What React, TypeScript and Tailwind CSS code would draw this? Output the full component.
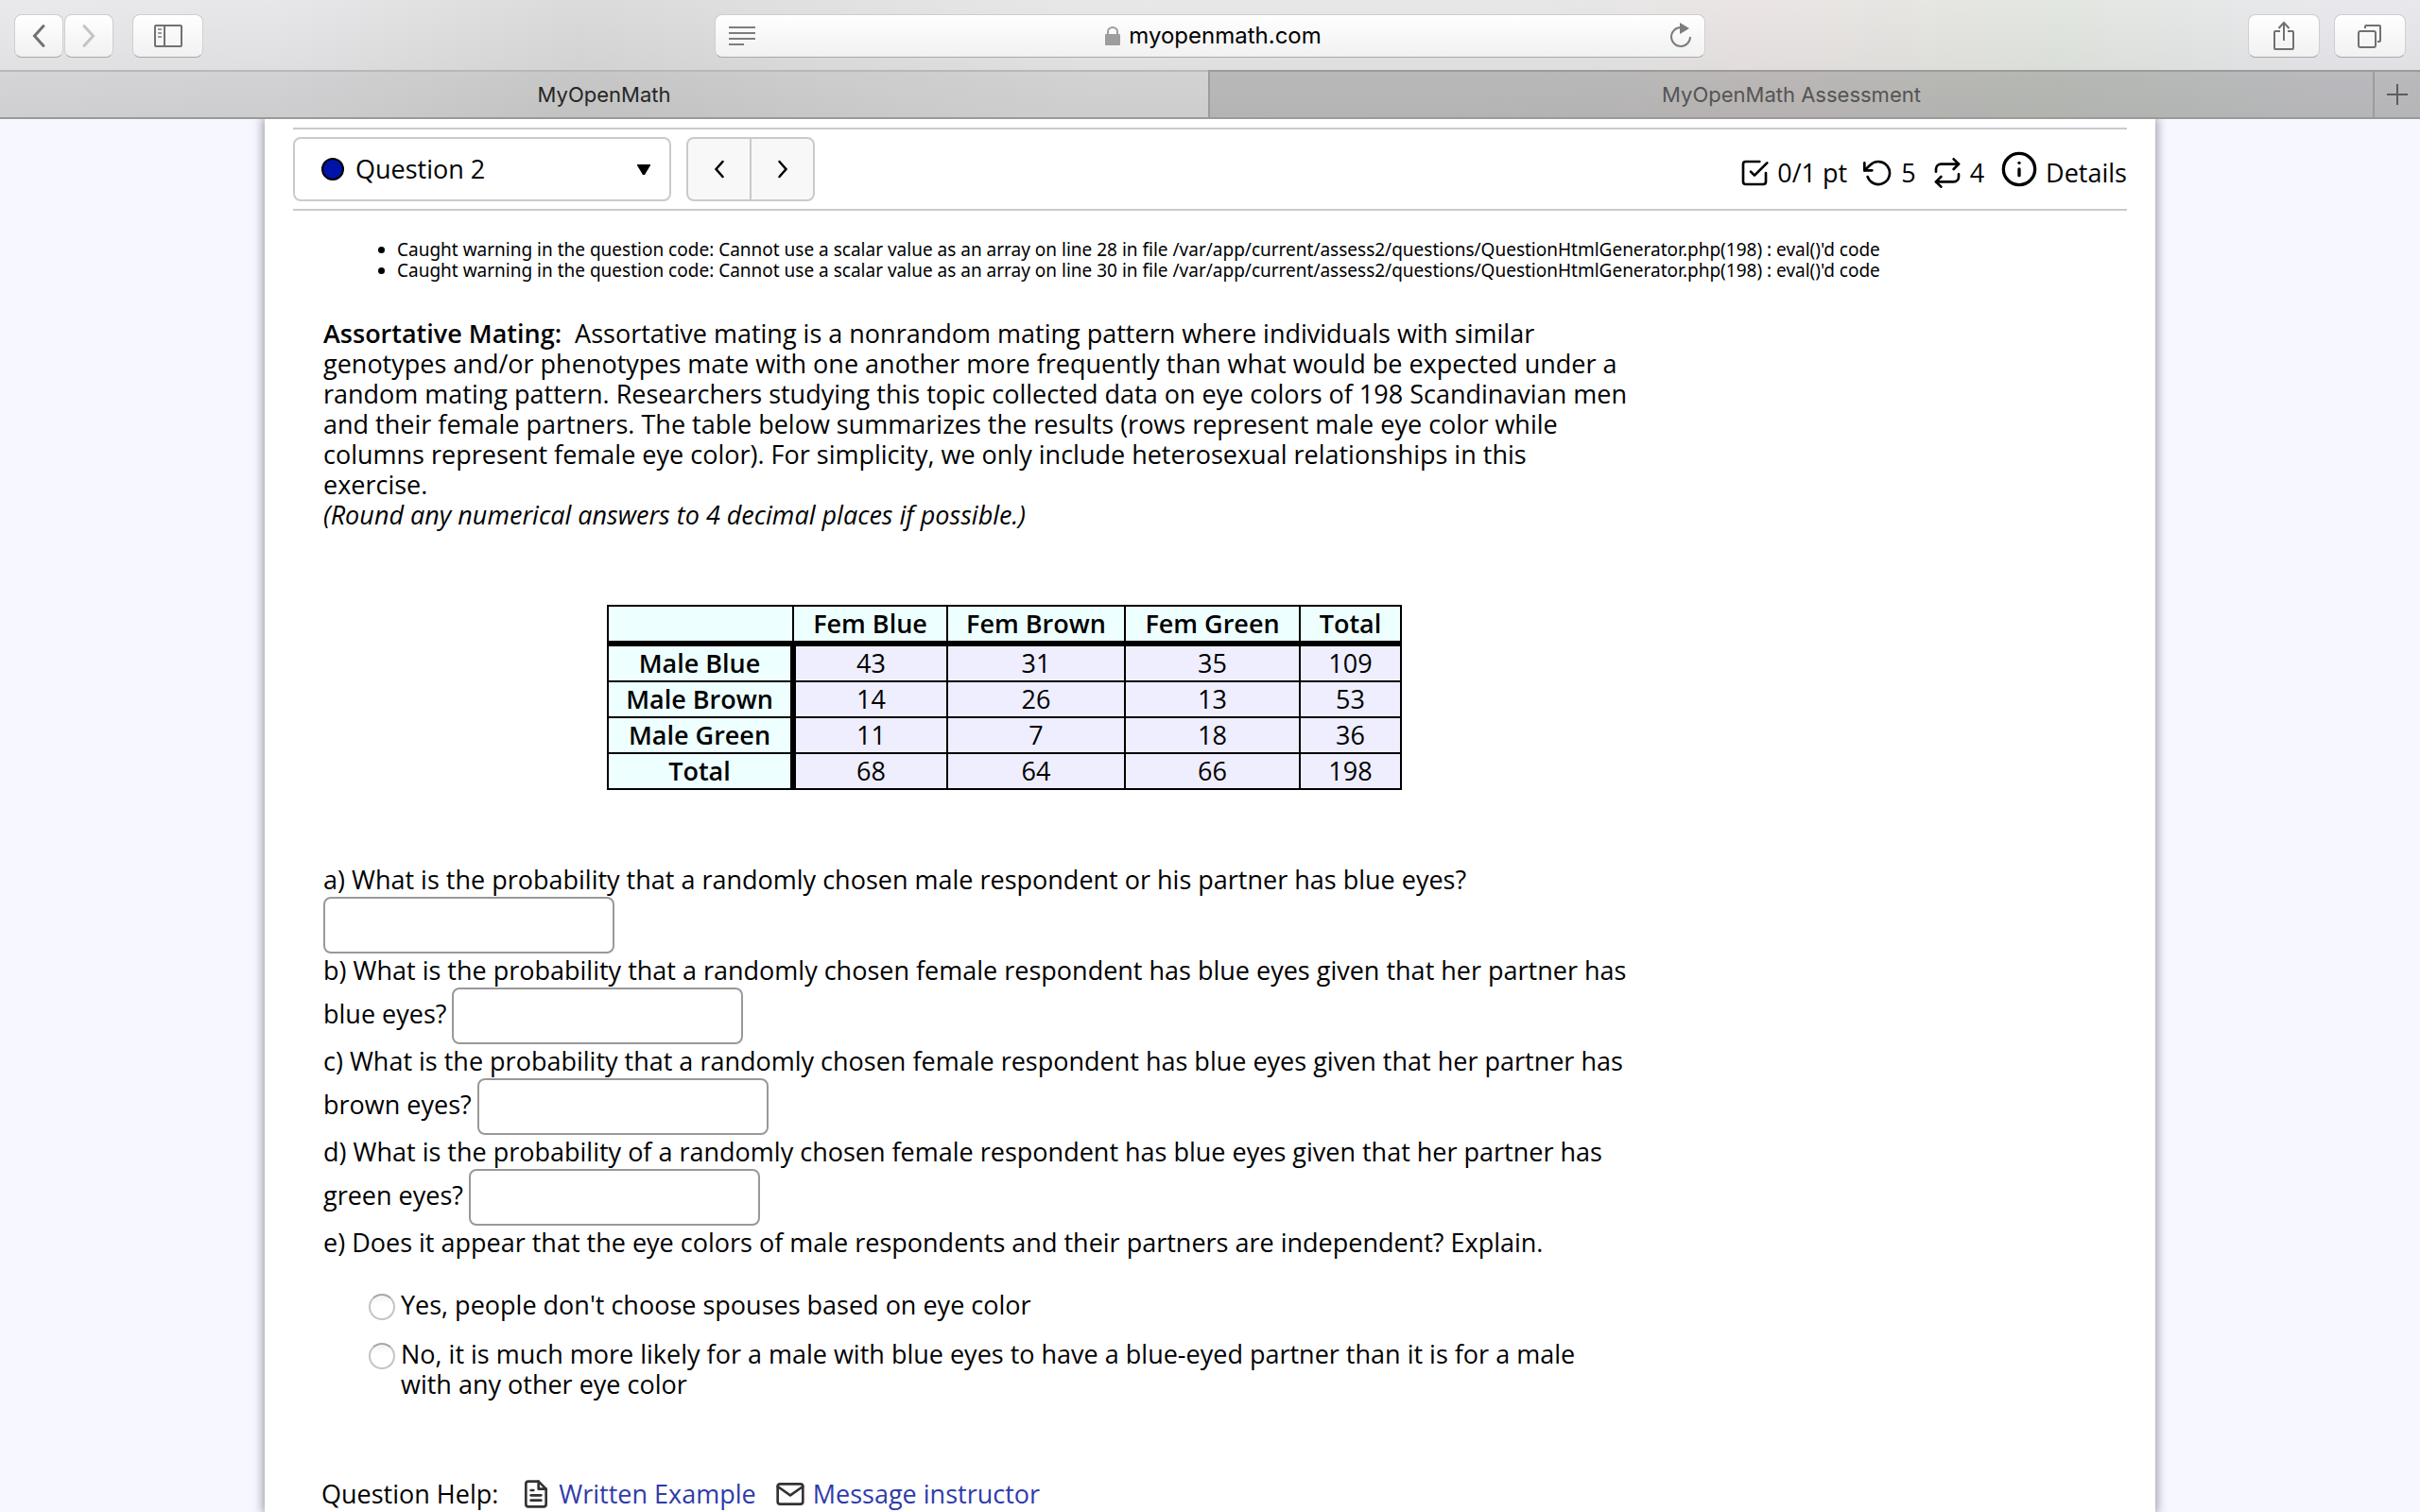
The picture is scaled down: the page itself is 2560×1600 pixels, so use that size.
import type { ReactNode } from "react";
import { FiCheckSquare, FiFileText, FiInfo, FiMail, FiRepeat, FiRotateCcw } from "react-icons/fi";

const columns = ["Fem Blue", "Fem Brown", "Fem Green", "Total"];

const rows = [
  { label: "Male Blue", values: [43, 31, 35, 109] },
  { label: "Male Brown", values: [14, 26, 13, 53] },
  { label: "Male Green", values: [11, 7, 18, 36] },
  { label: "Total", values: [68, 64, 66, 198] },
];

const questions = [
  {
    id: "qa",
    text: "a) What is the probability that a randomly chosen male respondent or his partner has blue eyes?",
    tail: "",
  },
  {
    id: "qb",
    text: "b) What is the probability that a randomly chosen female respondent has blue eyes given that her partner has",
    tail: "blue eyes?",
  },
  {
    id: "qc",
    text: "c) What is the probability that a randomly chosen female respondent has blue eyes given that her partner has",
    tail: "brown eyes?",
  },
  {
    id: "qd",
    text: "d) What is the probability of a randomly chosen female respondent has blue eyes given that her partner has",
    tail: "green eyes?",
  },
];

const warningLines = [28, 30];

function ToolbarButton({ label, className, children }: { label: string; className: string; children: ReactNode }) {
  return (
    <button
      type="button"
      aria-label={label}
      className={`flex h-[46px] items-center justify-center rounded-lg border border-[#cfcfcf] border-b-[#a9a9a9] bg-linear-to-b from-white to-[#f1f1f1] text-[#717171] ${className}`}
    >
      {children}
    </button>
  );
}

function BrowserToolbar() {
  return (
    <div className="grid h-[74px] grid-cols-[1fr_1048px_1fr] items-center px-[15px] pt-0.5">
      <div className="flex items-center gap-5">
        <div className="flex gap-px">
          <ToolbarButton label="Back" className="w-[52px]">
            <svg width="16" height="26" viewBox="0 0 16 26" fill="none" stroke="currentColor" strokeWidth="3" strokeLinecap="round">
              <path d="M13 2.500 3.500 13 13 23.500" />
            </svg>
          </ToolbarButton>
          <ToolbarButton label="Forward" className="w-[52px]">
            <svg width="16" height="26" viewBox="0 0 16 26" fill="none" stroke="#c4c4c4" strokeWidth="3" strokeLinecap="round">
              <path d="M3 2.500 12.500 13 3 23.500" />
            </svg>
          </ToolbarButton>
        </div>
        <ToolbarButton label="Show sidebar" className="w-[75px]">
          <svg width="30" height="24" viewBox="0 0 30 24" fill="none" stroke="currentColor" strokeWidth="2">
            <rect x="1" y="1" width="28" height="22" rx="1" />
            <path d="M11 1v22" />
            <path d="M4 5h4M4 9h4M4 13h4" stroke="#9a9a9a" />
          </svg>
        </ToolbarButton>
      </div>

      <div className="flex h-[46px] items-center justify-between rounded-lg border border-[#cfcfcf] border-b-[#a9a9a9] bg-linear-to-b from-white to-[#f1f1f1] px-3.5 text-[#7d7d7d]">
        <svg width="28" height="20" viewBox="0 0 28 20" fill="none" stroke="currentColor" strokeWidth="2">
          <path d="M0 1h28M0 7h28M0 13h28M0 19h16" />
        </svg>
        <div className="flex items-center gap-2 text-2xl text-black">
          <svg width="18" height="20" viewBox="0 0 18 20" fill="none">
            <rect x="1" y="8" width="16" height="12" rx="1" fill="#9d9d9d" />
            <path d="M4 9V5.500a5 4.500 0 0 1 10 0V9" stroke="#9d9d9d" strokeWidth="2" />
          </svg>
          myopenmath.com
        </div>
        <button type="button" aria-label="Reload" className="pb-0.5">
          <svg width="22" height="28" viewBox="0 0 22 28" fill="none" stroke="currentColor" strokeWidth="2">
            <path d="M11 6a10 10 0 1 0 10 10" />
            <path d="M10 1v12l10-6z" fill="currentColor" stroke="none" />
          </svg>
        </button>
      </div>

      <div className="flex justify-end gap-[15px]">
        <ToolbarButton label="Share" className="w-[76px]">
          <svg width="24" height="32" viewBox="0 0 24 32" fill="none" stroke="currentColor" strokeWidth="2">
            <path d="M8 11H3a1 1 0 0 0-1 1v17a1 1 0 0 0 1 1h18a1 1 0 0 0 1-1V12a1 1 0 0 0-1-1h-5M12 21V2M6.500 8 12 2l5.500 6" />
          </svg>
        </ToolbarButton>
        <ToolbarButton label="Show all tabs" className="w-[76px]">
          <svg width="26" height="26" viewBox="0 0 26 26" fill="none" stroke="currentColor" strokeWidth="2">
            <rect x="1" y="8" width="18" height="17" rx="2" />
            <path d="M8 5V3a1 1 0 0 1 1-1h14a1 1 0 0 1 1 1v15a1 1 0 0 1-1 1h-2" />
          </svg>
        </ToolbarButton>
      </div>
    </div>
  );
}

function BrowserTabs() {
  return (
    <div role="tablist" className="grid h-[52px] grid-cols-[1278fr_1232fr_50fr] border-b-2 border-[#9a9a9a] text-[22px]">
      <button type="button" role="tab" aria-selected="true" className="border-t-2 border-[#b8b8b8] bg-black/5 text-[#262626]">
        MyOpenMath
      </button>
      <button type="button" role="tab" aria-selected="false" className="border-t-2 border-l-2 border-[#9c9c9c] bg-black/17 text-[#545454]">
        MyOpenMath Assessment
      </button>
      <button
        type="button"
        aria-label="New tab"
        className="flex items-center justify-center border-t-2 border-l-2 border-[#9c9c9c] bg-black/17"
      >
        <svg width="22" height="22" viewBox="0 0 22 22" stroke="#5c5c5c" strokeWidth="2">
          <path d="M11 0v22M0 11h22" />
        </svg>
      </button>
    </div>
  );
}

function QuestionHeader() {
  return (
    <div className="flex items-center justify-between border-y-2 border-[#cacaca] py-2">
      <div className="flex gap-4">
        <div className="flex h-[68px] w-[400px] items-center rounded-lg border-2 border-[#cacaca] pr-5 pl-7">
          <svg width="24" height="24" viewBox="0 0 24 24">
            <circle cx="12" cy="12" r="11" fill="#0013a8" stroke="black" strokeWidth="2" />
          </svg>
          <select aria-label="Question" className="flex-1 appearance-none bg-transparent pl-3">
            <option>Question 2</option>
          </select>
          <svg width="14" height="12" viewBox="0 0 14 12">
            <path d="M0 1h14v1L8 12H6L0 2z" />
          </svg>
        </div>
        <div className="flex rounded-lg border-2 border-[#cacaca] bg-[#f8f8f8]">
          <button type="button" aria-label="Previous question" className="flex w-[67px] items-center justify-center border-r-2 border-[#cacaca]">
            <svg width="12" height="20" viewBox="0 0 12 20" fill="none" stroke="black" strokeWidth="2.500" strokeLinecap="round">
              <path d="m9.500 2-7 8 7 8" />
            </svg>
          </button>
          <button type="button" aria-label="Next question" className="flex w-[65px] items-center justify-center">
            <svg width="12" height="20" viewBox="0 0 12 20" fill="none" stroke="black" strokeWidth="2.500" strokeLinecap="round">
              <path d="m2.500 2 7 8-7 8" />
            </svg>
          </button>
        </div>
      </div>
      <div className="flex items-center gap-[17px]">
        <span className="flex items-center gap-2 pt-2">
          <FiCheckSquare size={32} /> 0/1 pt
        </span>
        <span className="flex items-center gap-2 pt-2">
          <FiRotateCcw size={32} /> 5
        </span>
        <span className="flex items-center gap-2 pt-2">
          <FiRepeat size={32} /> 4
        </span>
        <button type="button" className="flex items-center gap-2">
          <FiInfo size={40} />
          <span className="pt-2">Details</span>
        </button>
      </div>
    </div>
  );
}

function EyeColorTable() {
  return (
    <table className="mt-[79px] ml-[300px] w-[839px] table-fixed border-collapse text-center leading-9">
      <colgroup>
        <col className="w-[196px]" />
        <col className="w-[163px]" />
        <col className="w-[188px]" />
        <col className="w-[185px]" />
        <col className="w-[107px]" />
      </colgroup>
      <thead>
        <tr className="bg-[#eeffff]">
          <td className="border-2 border-b-[6px] border-black" />
          {columns.map((column) => (
            <th key={column} scope="col" className="border-2 border-b-[6px] border-black p-0 font-semibold">
              {column}
            </th>
          ))}
        </tr>
      </thead>
      <tbody>
        {rows.map((row) => (
          <tr key={row.label} className="bg-[#eeeeff]">
            <th scope="row" className="border-2 border-r-[6px] border-black bg-[#eeffff] p-0 font-semibold">
              {row.label}
            </th>
            {row.values.map((value, i) => (
              <td key={i} className="border-2 border-black p-0">
                {value}
              </td>
            ))}
          </tr>
        ))}
      </tbody>
    </table>
  );
}

function Radio({ id }: { id: string }) {
  return (
    <input
      id={id}
      type="radio"
      name="independent"
      className="mt-1 size-7 shrink-0 appearance-none rounded-full border-2 border-[#c4c4c4] border-t-[#a8a8a8] bg-linear-to-b from-[#f4f4f4] to-white to-40%"
    />
  );
}

export default function App() {
  return (
    <div className="flex min-h-screen flex-col bg-[#f7f7ff] font-['Open_Sans',sans-serif] text-[27px] leading-8 text-black">
      <header className="relative bg-[linear-gradient(90deg,#e4e4f040_0%,#d8d8e040_12%,#a8a8a840_24%,#dcdcdc40_45%,#d8d8d840_65%,#e8d0d040_72%,#c8d8c040_85%,#e0e0f040_96%),linear-gradient(#ececec,#d8d8d8)] font-[Inter,sans-serif]">
        <BrowserToolbar />
        <BrowserTabs />
      </header>

      <main className="mx-[280px] flex-1 bg-white px-[30px] pt-[9px] shadow-[0_0_10px_2px_#9a9aa8]">
        <QuestionHeader />

        <ul className="mt-[30px] ml-[110px] list-disc font-['Noto_Sans',sans-serif] text-[19px] leading-[22px]">
          {warningLines.map((line) => (
            <li key={line}>
              Caught warning in the question code: Cannot use a scalar value as an array on line {line} in file
              /var/app/current/assess2/questions/QuestionHtmlGenerator.php(198) : eval()'d code
            </li>
          ))}
        </ul>

        <div className="mt-10 ml-8">
          <p>
            <strong className="font-semibold">Assortative Mating:</strong>&nbsp; Assortative mating is a nonrandom mating pattern where individuals with similar
            <br />
            genotypes and/or phenotypes mate with one another more frequently than what would be expected under a
            <br />
            random mating pattern. Researchers studying this topic collected data on eye colors of 198 Scandinavian men
            <br />
            and their female partners. The table below summarizes the results (rows represent male eye color while
            <br />
            columns represent female eye color). For simplicity, we only include heterosexual relationships in this
            <br />
            exercise.
            <br />
            <em>(Round any numerical answers to 4 decimal places if possible.)</em>
          </p>

          <EyeColorTable />

          <div className="mt-[79px]">
            {questions.map((question) => (
              <div key={question.id}>
                <label htmlFor={question.id}>{question.text}</label>
                <div className="flex h-16 items-center gap-1.5">
                  {question.tail && (
                    <label htmlFor={question.id} className="pb-1">
                      {question.tail}
                    </label>
                  )}
                  <input id={question.id} type="text" className="h-[60px] w-[308px] rounded-lg border-2 border-[#999999] bg-white px-3" />
                </div>
              </div>
            ))}
            <p>e) Does it appear that the eye colors of male respondents and their partners are independent? Explain.</p>
          </div>

          <div className="mt-[34px] ml-12 flex flex-col gap-5">
            <div className="flex gap-1.5">
              <Radio id="yes" />
              <label htmlFor="yes">Yes, people don't choose spouses based on eye color</label>
            </div>
            <div className="flex gap-1.5">
              <Radio id="no" />
              <label htmlFor="no">
                No, it is much more likely for a male with blue eyes to have a blue-eyed partner than it is for a male
                <br />
                with any other eye color
              </label>
            </div>
          </div>
        </div>

        <div className="mt-[84px] ml-[30px] flex items-center">
          <span>Question Help:</span>
          <a href="#written" className="ml-6 flex items-center gap-2 text-[#2f3bab]">
            <FiFileText size={32} color="#333333" /> Written Example
          </a>
          <a href="#message" className="ml-5 flex items-center gap-2 text-[#2f3bab]">
            <FiMail size={32} color="#333333" /> Message instructor
          </a>
        </div>
      </main>
    </div>
  );
}
